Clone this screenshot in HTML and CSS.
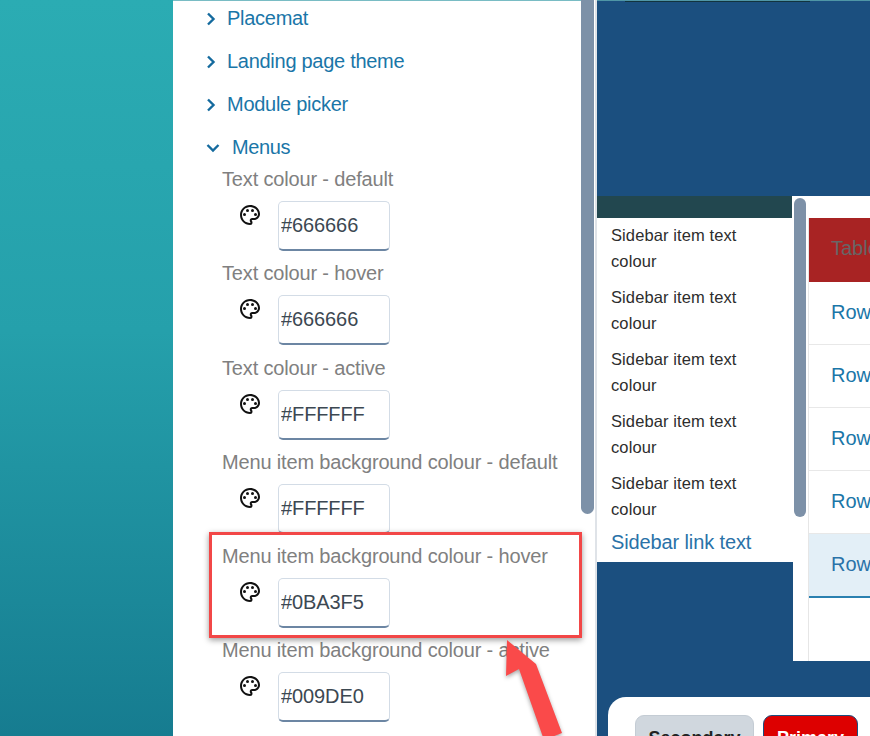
FILE: index.html
```html
<!DOCTYPE html>
<html lang="en">
<head>
<meta charset="utf-8">
<title>Theme editor</title>
<link rel="stylesheet" href="styles.css">
</head>
<body>
<svg class="defs" width="0" height="0" aria-hidden="true">
  <symbol id="palette" viewBox="0 0 24 24">
    <path d="M12 22C6.49 22 2 17.51 2 12S6.49 2 12 2s10 4.04 10 9c0 3.31-2.69 6-6 6h-1.77c-.28 0-.5.22-.5.5 0 .12.05.23.13.33.41.47.64 1.06.64 1.67A2.5 2.5 0 0 1 12 22zm0-18c-4.41 0-8 3.59-8 8s3.59 8 8 8c.28 0 .5-.22.5-.5a.54.54 0 0 0-.14-.35c-.41-.46-.63-1.05-.63-1.65a2.5 2.5 0 0 1 2.5-2.5H16c2.21 0 4-1.79 4-4 0-3.86-3.59-7-8-7z"/>
    <circle cx="6.5" cy="11.5" r="1.5"/><circle cx="9.5" cy="7.5" r="1.5"/><circle cx="14.5" cy="7.5" r="1.5"/><circle cx="17.5" cy="11.5" r="1.5"/>
  </symbol>
</svg>
<div class="app">
  <div class="rail"></div>
  <main class="panel">
    <div class="nav-item"><svg class="chev" viewBox="0 0 10 14"><path d="M2 1.500 7.500 7 2 12.500"/></svg><span>Placemat</span></div>
    <div class="nav-item"><svg class="chev" viewBox="0 0 10 14"><path d="M2 1.500 7.500 7 2 12.500"/></svg><span>Landing page theme</span></div>
    <div class="nav-item"><svg class="chev" viewBox="0 0 10 14"><path d="M2 1.500 7.500 7 2 12.500"/></svg><span>Module picker</span></div>
    <div class="nav-item open"><svg class="chev-down" viewBox="0 0 14 10"><path d="M1.500 2 7 7.500 12.500 2"/></svg><span>Menus</span></div>
    <div class="field">
      <div class="field-label">Text colour - default</div>
      <div class="field-row"><svg class="palette"><use href="#palette"/></svg><input class="colour" value="#666666"></div>
    </div>
    <div class="field">
      <div class="field-label">Text colour - hover</div>
      <div class="field-row"><svg class="palette"><use href="#palette"/></svg><input class="colour" value="#666666"></div>
    </div>
    <div class="field">
      <div class="field-label">Text colour - active</div>
      <div class="field-row"><svg class="palette"><use href="#palette"/></svg><input class="colour" value="#FFFFFF"></div>
    </div>
    <div class="field">
      <div class="field-label">Menu item background colour - default</div>
      <div class="field-row"><svg class="palette"><use href="#palette"/></svg><input class="colour" value="#FFFFFF"></div>
    </div>
    <div class="field">
      <div class="field-label">Menu item background colour - hover</div>
      <div class="field-row"><svg class="palette"><use href="#palette"/></svg><input class="colour" value="#0BA3F5"></div>
    </div>
    <div class="field">
      <div class="field-label">Menu item background colour - active</div>
      <div class="field-row"><svg class="palette"><use href="#palette"/></svg><input class="colour" value="#009DE0"></div>
    </div>
  </main>
  <div class="track"><div class="thumb thumb-panel"></div></div>
  <section class="preview">
    <div class="preview-top"><div class="top-shade"></div></div>
    <div class="preview-mid">
      <aside class="sidebar">
        <div class="sidebar-head"></div>
        <div class="sidebar-list">
          <div class="sidebar-item">Sidebar item text colour</div>
          <div class="sidebar-item">Sidebar item text colour</div>
          <div class="sidebar-item">Sidebar item text colour</div>
          <div class="sidebar-item">Sidebar item text colour</div>
          <div class="sidebar-item">Sidebar item text colour</div>
          <div class="sidebar-link">Sidebar link text</div>
        </div>
      </aside>
      <div class="content">
        <div class="track-inner"><div class="thumb thumb-inner"></div></div>
        <div class="table">
          <div class="table-head">Table</div>
          <div class="table-row">Row</div>
          <div class="table-row">Row</div>
          <div class="table-row">Row</div>
          <div class="table-row">Row</div>
          <div class="table-row hover">Row</div>
        </div>
      </div>
    </div>
    <div class="card">
      <button class="btn secondary">Secondary</button>
      <button class="btn primary">Primary</button>
    </div>
  </section>
</div>
<div class="callout"></div>
<svg class="arrow" viewBox="0 0 870 736" width="870" height="736" aria-hidden="true">
  <path class="arrow-fill" d="M507 640 506 676 519 669 544 740 562 733 536 664Z"/>
</svg>
</body>
</html>
```

FILE: styles.css
```css
* { box-sizing: border-box; }
html, body { margin: 0; padding: 0; width: 870px; height: 736px; overflow: hidden; background: #fff; }
body { position: relative; font-family: "Liberation Sans", Arial, sans-serif; }
.defs { position: absolute; }

.app { display: flex; width: 870px; height: 736px; overflow: hidden; }

.rail {
  flex: 0 0 173px;
  background: linear-gradient(180deg, #2bacb3 0%, #25a0ab 45%, #167c90 100%);
}

.panel {
  flex: 0 0 408px;
  background: #fff;
  padding-left: 33px;
  border-top: 1px solid #79bcc4;
}
.nav-item {
  display: flex;
  align-items: center;
  height: 43px;
  color: #1a76a8;
  font-size: 20px;
  letter-spacing: -0.28px;
  gap: 11px;
}
.nav-item:first-child { margin-top: -4px; }
.nav-item.open { gap: 12px; height: 42px; letter-spacing: -0.4px; }
.chev { width: 10px; height: 14px; flex: none; }
.chev-down { width: 14px; height: 10px; flex: none; margin-top: 2px; }
.chev path, .chev-down path { fill: none; stroke: #146a9e; stroke-width: 2.4; }

.field { height: 94.3px; padding-left: 16px; }
.field-label {
  color: #808080;
  font-size: 20px;
  letter-spacing: -0.16px;
  line-height: 22px;
  white-space: nowrap;
}
.field-row { display: flex; align-items: flex-start; padding-left: 16px; gap: 16px; margin-top: 11px; }
.palette { width: 24px; height: 24px; flex: none; margin-top: 2px; fill: #111; }
.colour {
  width: 112px;
  height: 50px;
  border: 1px solid #d3dce6;
  border-bottom: 2px solid #6c86a3;
  border-radius: 5px;
  background: #fff;
  color: #3c4852;
  font: 20px "Liberation Sans", Arial, sans-serif;
  letter-spacing: -0.1px;
  padding: 0 2px;
}

.track {
  flex: 0 0 16px;
  background: #fff;
  border-right: 2px solid #dfe3e8;
}
.thumb { background: #7d91a8; border-radius: 0 0 7px 7px; }
.thumb-panel { width: 13px; height: 514px; }

.preview {
  flex: 1 1 auto;
  min-width: 0;
  background: #1b4f7f;
  display: flex;
  flex-direction: column;
  border-top: 1px solid #4f96a6;
}
.preview-top { flex: none; height: 195px; }
.top-shade { height: 1px; margin-left: 28px; width: 185px; background: #12343f; }

.preview-mid { flex: none; display: flex; align-items: flex-start; height: 465px; }
.sidebar { flex: 0 0 196px; height: 366px; background: #fff; }
.sidebar-head { height: 22px; background: #22474f; margin-right: 1px; }
.sidebar-list { padding: 4px 30px 0 14px; }
.sidebar-item {
  color: #2d2d2d;
  font-size: 16.5px;
  letter-spacing: 0.1px;
  line-height: 26px;
  margin-bottom: 10px;
}
.sidebar-link { color: #2a72a8; font-size: 20px; letter-spacing: -0.12px; margin-top: -3px; line-height: 26px; }

.content {
  flex: 1 1 auto;
  min-width: 0;
  height: 465px;
  background: #fff;
  display: flex;
  overflow: hidden;
}
.track-inner { flex: 0 0 15px; padding: 2px 0 0 1px; }
.thumb-inner { width: 12px; height: 319px; border-radius: 7px; }
.table { flex: 1 1 auto; min-width: 0; margin-top: 22px; white-space: nowrap; border-left: 1px solid #e6e6e6; }
.table-head {
  height: 64px;
  background: #a82323;
  color: #666;
  font-size: 20px;
  padding: 19px 0 0 22px;
}
.table-row {
  height: 63px;
  border-bottom: 1px solid #e8e8e8;
  color: #1a76a8;
  font-size: 20px;
  line-height: 60px;
  padding-left: 22px;
}
.table-row.hover { background: #e3eff7; border-bottom: 2px solid #2a80b0; color: #2a72a8; height: 64px; }

.card {
  flex: none;
  margin: 36px 0 0 11px;
  background: #fff;
  border-radius: 18px 0 0 0;
  height: 120px;
  padding: 18px 0 0 27px;
  display: flex;
  align-items: flex-start;
  gap: 9px;
}
.btn { flex: none; height: 46px; border-radius: 9px; font: 700 18px "Liberation Sans", Arial, sans-serif; padding: 0; display: block; }
.secondary { width: 119px; background: #d0d7de; border: 1px solid #c4ccd4; color: #222; }
.primary { width: 95px; background: #dd0000; border: 1px solid #1b4f7f; color: #fff; }

.callout {
  position: absolute;
  left: 209px;
  top: 532px;
  width: 373px;
  height: 106px;
  border: 3px solid #f24747;
  box-shadow: 0 2px 6px rgba(0, 0, 0, .4);
  pointer-events: none;
}
.arrow { position: absolute; left: 0; top: 0; pointer-events: none; filter: drop-shadow(0 2px 2px rgba(0, 0, 0, .35)); }
.arrow-fill { fill: #fa4a4a; }
```
